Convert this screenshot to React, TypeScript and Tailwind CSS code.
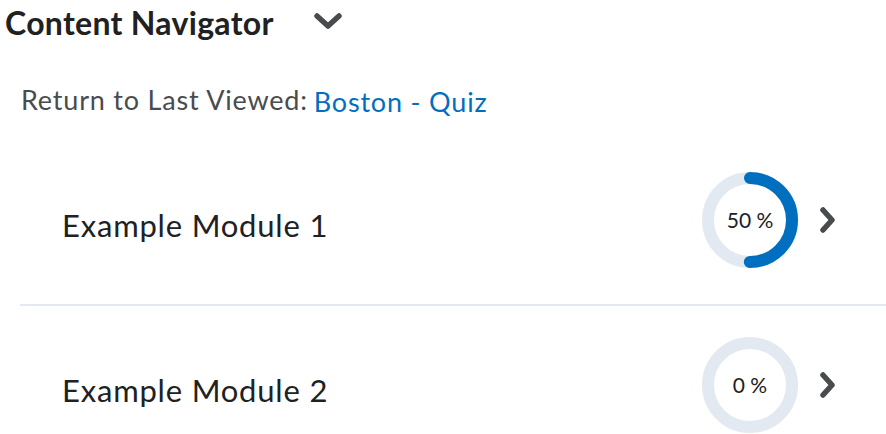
import React from "react";

const font = { fontFamily: "Lato, 'Noto Sans', sans-serif" };

function ChevronDown() {
  return (
    <svg width="28" height="16" viewBox="0 0 28 16" fill="none">
      <polyline
        points="3,3 14,13 25,3"
        stroke="#494c4e"
        strokeWidth="5.5"
        strokeLinecap="round"
        strokeLinejoin="round"
      />
    </svg>
  );
}

function ChevronRight() {
  return (
    <svg width="15" height="26" viewBox="0 0 15 26" fill="none">
      <polyline
        points="3,3 12,13 3,23"
        stroke="#494c4e"
        strokeWidth="5.5"
        strokeLinecap="round"
        strokeLinejoin="round"
      />
    </svg>
  );
}

function ProgressRing({ value }: { value: number }) {
  const r = 42;
  const c = 2 * Math.PI * r;
  const len = (value / 100) * c;
  return (
    <div className="relative w-[96px] h-[96px] shrink-0">
      <svg width="96" height="96" viewBox="0 0 96 96" className="-rotate-90">
        <circle cx="48" cy="48" r={r} fill="none" stroke="#e3e9f1" strokeWidth="12" />
        {value > 0 && (
          <circle
            cx="48"
            cy="48"
            r={r}
            fill="none"
            stroke="#006fbf"
            strokeWidth="12"
            strokeLinecap="round"
            strokeDasharray={`${len} ${c}`}
          />
        )}
      </svg>
      <div className="absolute inset-0 flex items-center justify-center text-[21px] text-[#202122]">
        {value} %
      </div>
    </div>
  );
}

function ModuleRow({ title, value, first }: { title: string; value: number; first?: boolean }) {
  return (
    <div
      className={`flex items-center pl-[42px] pr-[51px] ${
        first ? "py-9 border-b-2 border-[#e3e9f1]" : "pt-[31px] pb-9"
      }`}
    >
      <div className="flex-1 text-[31px] leading-[1.2] tracking-[0.8px] text-[#202122] relative top-[6px]">
        {title}
      </div>
      <ProgressRing value={value} />
      <div className="ml-[22px]">
        <ChevronRight />
      </div>
    </div>
  );
}

export default function App() {
  return (
    <div className="bg-white w-[886px] h-[434px] overflow-hidden" style={font}>
      {/* Header */}
      <div className="flex items-center pl-[5px] pt-[4px]">
        <h1 className="text-[32px] leading-[1.2] font-bold tracking-[0.3px] text-[#202122]">
          Content Navigator
        </h1>
        <button className="ml-[40px] mt-[-4px]">
          <ChevronDown />
        </button>
      </div>

      {/* Last viewed */}
      <div className="pl-[21px] mt-[42px] text-[27px] leading-[1.2] tracking-[0.8px] text-[#494c4e]">
        Return to Last Viewed:
        <a className="ml-[6px] text-[#006fbf] relative top-[2px]" href="#">
          Boston - Quiz
        </a>
      </div>

      {/* Modules */}
      <div className="ml-[20px] mt-[19px]">
        <ModuleRow title="Example Module 1" value={50} first />
        <ModuleRow title="Example Module 2" value={0} />
      </div>
    </div>
  );
}
